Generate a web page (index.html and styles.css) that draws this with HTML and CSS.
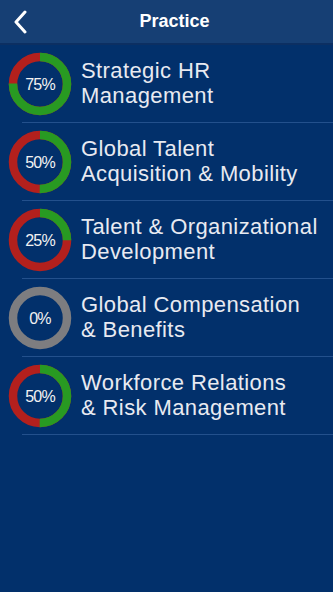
FILE: index.html
```html
<!DOCTYPE html>
<html lang="en">
<head>
  <meta charset="UTF-8">
  <meta name="viewport" content="width=device-width, initial-scale=1.0">
  <title>Practice</title>
  <link rel="stylesheet" href="styles.css">
</head>
<body>

<div class="header">
  <svg class="back" width="14" height="24" viewBox="0 0 14 24">
    <path d="M12 2 L3 12 L12 22" fill="none" stroke="#fff" stroke-width="3" stroke-linecap="round" stroke-linejoin="round"/>
  </svg>
  <h1>Practice</h1>
</div>

<ul class="list">
  <li class="row">
    <svg class="donut" width="64" height="64" viewBox="0 0 64 64">
      <circle cx="32" cy="32" r="27" class="ring-rest"/>
      <circle cx="32" cy="32" r="27" class="ring-done" stroke-dasharray="127.23 169.65" transform="rotate(-90 32 32)"/>
      <text x="32" y="38">75%</text>
    </svg>
    <span class="label">Strategic HR<br>Management</span>
  </li>
  <li class="row">
    <svg class="donut" width="64" height="64" viewBox="0 0 64 64">
      <circle cx="32" cy="32" r="27" class="ring-rest"/>
      <circle cx="32" cy="32" r="27" class="ring-done" stroke-dasharray="84.82 169.65" transform="rotate(-90 32 32)"/>
      <text x="32" y="38">50%</text>
    </svg>
    <span class="label">Global Talent<br>Acquisition &amp; Mobility</span>
  </li>
  <li class="row">
    <svg class="donut" width="64" height="64" viewBox="0 0 64 64">
      <circle cx="32" cy="32" r="27" class="ring-rest"/>
      <circle cx="32" cy="32" r="27" class="ring-done" stroke-dasharray="42.41 169.65" transform="rotate(-90 32 32)"/>
      <text x="32" y="38">25%</text>
    </svg>
    <span class="label">Talent &amp; Organizational<br>Development</span>
  </li>
  <li class="row">
    <svg class="donut" width="64" height="64" viewBox="0 0 64 64">
      <circle cx="32" cy="32" r="27" class="ring-empty"/>
      <text x="32" y="38">0%</text>
    </svg>
    <span class="label">Global Compensation<br>&amp; Benefits</span>
  </li>
  <li class="row">
    <svg class="donut" width="64" height="64" viewBox="0 0 64 64">
      <circle cx="32" cy="32" r="27" class="ring-rest"/>
      <circle cx="32" cy="32" r="27" class="ring-done" stroke-dasharray="84.82 169.65" transform="rotate(-90 32 32)"/>
      <text x="32" y="38">50%</text>
    </svg>
    <span class="label">Workforce Relations<br>&amp; Risk Management</span>
  </li>
</ul>

</body>
</html>
```

FILE: styles.css
```css
body {
  margin: 0;
  font-family: "Liberation Sans", Arial, sans-serif;
  background-color: #02306b;
  color: #e8eaf1;
  height: 592px;
  overflow: hidden;
}
.header {
  height: 43px;
  background-color: #163f74;
  border-bottom: 2px solid #0c2f62;
  display: flex;
  align-items: center;
  justify-content: center;
  padding-left: 16px;
  position: relative;
}
.back {
  position: absolute;
  left: 13px;
  top: 10px;
}
h1 {
  margin: 0;
  font-size: 18px;
  font-weight: bold;
  color: #fff;
}
.list {
  list-style: none;
  margin: 0;
  padding: 0;
}
.row {
  display: flex;
  align-items: center;
  height: 78px;
  padding-left: 8px;
  position: relative;
}
.row::after {
  content: "";
  position: absolute;
  left: 22px;
  right: 0;
  bottom: 0;
  height: 1px;
  background-color: #23508c;
}
.donut {
  flex: none;
  margin-right: 9px;
}
.donut circle {
  fill: none;
  stroke-width: 8.5;
}
.ring-rest {
  stroke: #b3201d;
}
.ring-done {
  stroke: #289a22;
}
.ring-empty {
  stroke: #7d7d80;
}
.donut text {
  fill: #f2f2f2;
  font-family: "Liberation Sans", Arial, sans-serif;
  font-size: 16px;
  letter-spacing: -0.8px;
  text-anchor: middle;
}
.label {
  font-size: 22px;
  line-height: 25px;
  letter-spacing: 0.4px;
  padding-bottom: 2px;
}
```
